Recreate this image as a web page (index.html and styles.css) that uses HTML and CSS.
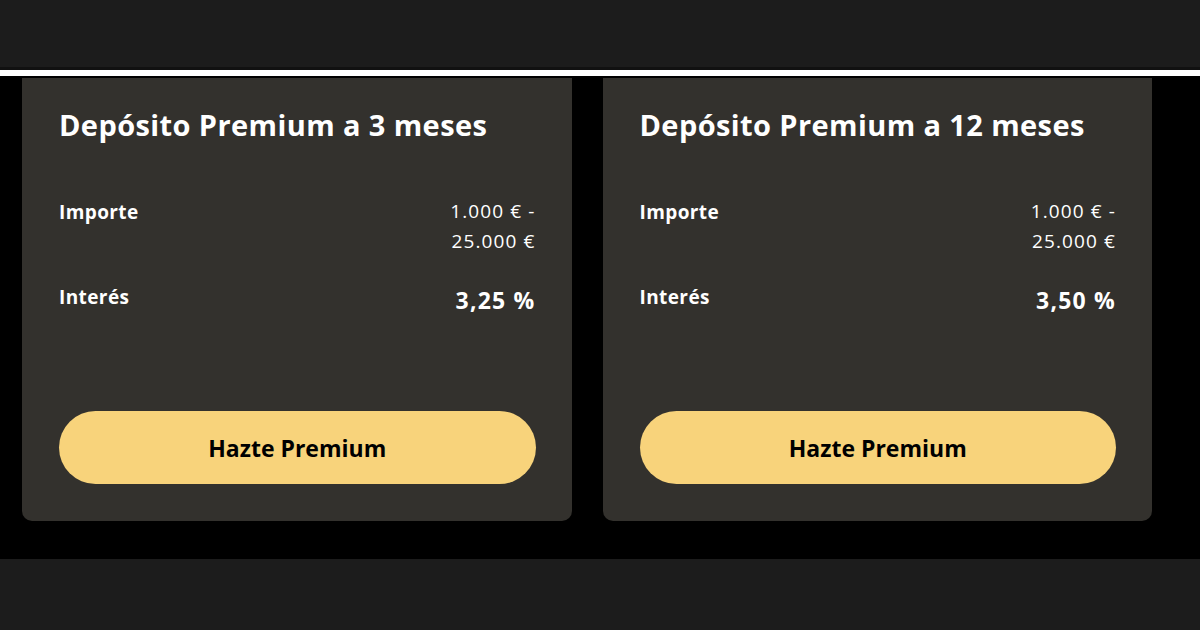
FILE: index.html
```html
<!DOCTYPE html>
<html lang="es">
<head>
  <meta charset="UTF-8">
  <title>Depósitos Premium</title>
  <link rel="stylesheet" href="styles.css">
</head>
<body>
  <header class="topbar"></header>

  <main class="deposits">
    <div class="card">
      <h2>Depósito Premium a 3 meses</h2>
      <div class="row">
        <span class="label">Importe</span>
        <span class="value">1.000 € -<br>25.000 €</span>
      </div>
      <div class="row">
        <span class="label">Interés</span>
        <span class="value rate">3,25 %</span>
      </div>
      <button class="cta">Hazte Premium</button>
    </div>

    <div class="card">
      <h2>Depósito Premium a 12 meses</h2>
      <div class="row">
        <span class="label">Importe</span>
        <span class="value">1.000 € -<br>25.000 €</span>
      </div>
      <div class="row">
        <span class="label">Interés</span>
        <span class="value rate">3,50 %</span>
      </div>
      <button class="cta">Hazte Premium</button>
    </div>
  </main>

  <footer class="bottombar"></footer>
</body>
</html>
```

FILE: styles.css
```css
body {
  margin: 0;
  background: #000;
  font-family: 'Open Sans', 'Lato', sans-serif;
  color: #fff;
}

.topbar {
  height: 67px;
  background: #1c1c1c;
  border-bottom: 3px solid #111;
}

.deposits {
  border-top: 6px solid #fff;
  display: grid;
  grid-template-columns: 1fr 1fr;
  gap: 31px;
  padding: 2px 48px 38px 22px;
}

.card {
  background: #33312d;
  border-radius: 0 0 10px 10px;
  padding: 28px 36px 37px 37px;
  display: flex;
  flex-direction: column;
}

h2 {
  margin: 0 0 56px;
  font-size: 29px;
  line-height: 38px;
  font-weight: 700;
  letter-spacing: 0.4px;
  white-space: nowrap;
}

.row {
  display: flex;
  justify-content: space-between;
  align-items: flex-start;
  margin-bottom: 29px;
}

.label {
  font-size: 19px;
  line-height: 24px;
  font-weight: 700;
  letter-spacing: 0.4px;
}

.value {
  font-size: 19px;
  line-height: 30px;
  text-align: right;
  letter-spacing: 1.1px;
  margin-top: -4px;
}

.rate {
  font-size: 23px;
  font-weight: 700;
  letter-spacing: 1.2px;
  margin-top: 0;
}

.cta {
  margin-top: 67px;
  height: 73px;
  border: none;
  border-radius: 37px;
  background: #f8d37b;
  color: #000;
  font-family: inherit;
  font-size: 23px;
  font-weight: 700;
  cursor: pointer;
}

.bottombar {
  height: 71px;
  background: #1c1c1c;
}
```
